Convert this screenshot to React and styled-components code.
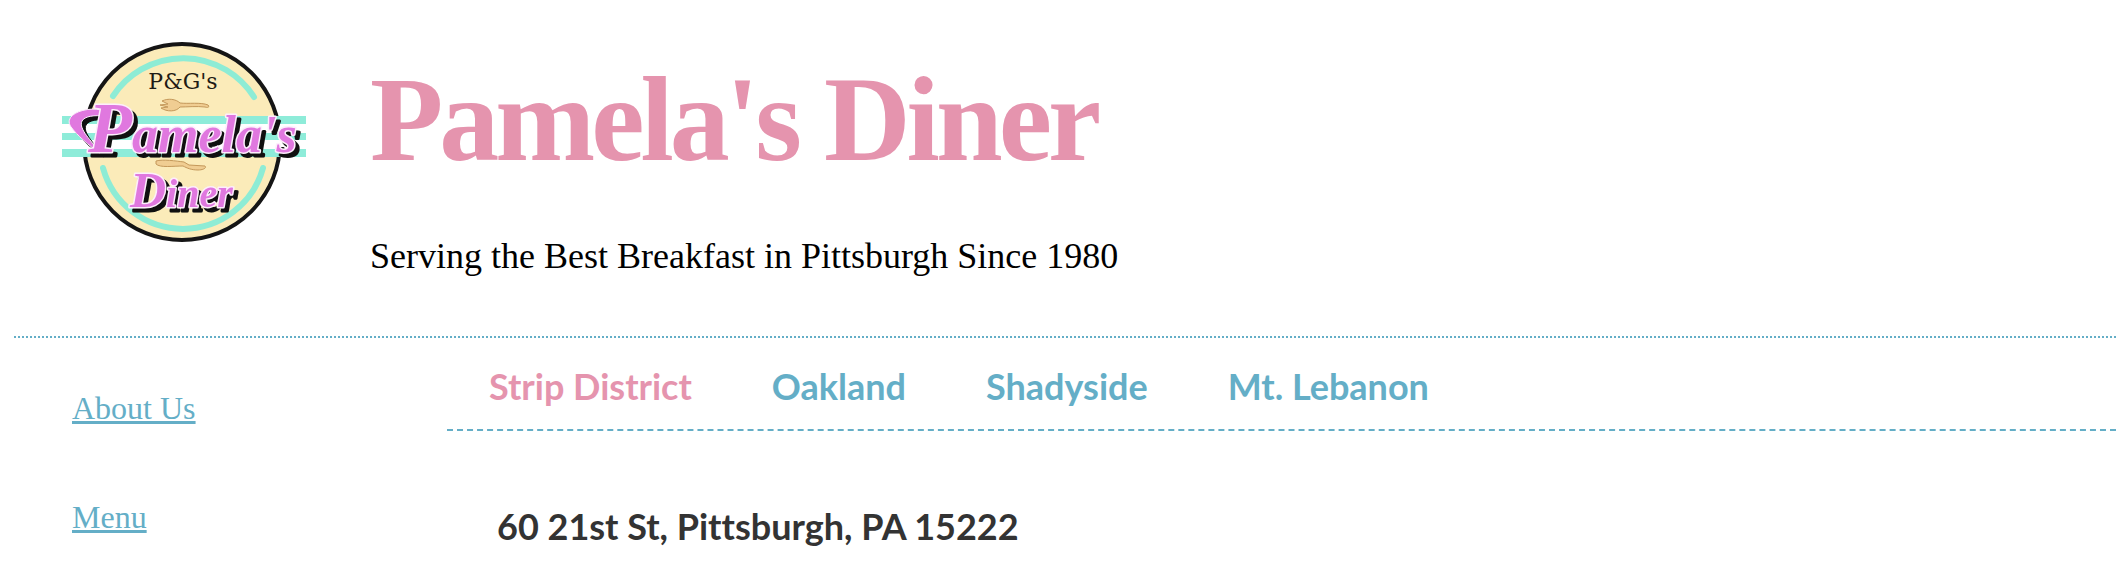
import React from "react";
import styled, { createGlobalStyle } from "styled-components";

const PINK = "#e594ae";
const BLUE = "#64aec7";

const GlobalStyle = createGlobalStyle`
  body {
    margin: 0;
    background: #fff;
    color: #000;
    font-family: "Times New Roman", "Liberation Serif", serif;
  }
`;

const Page = styled.div`
  padding-left: 14px;
`;

const Header = styled.header`
  display: flex;
  align-items: flex-start;
  gap: 64px;
  padding: 30px 0 60px 48px;
  border-bottom: 2px dotted ${BLUE};
`;

const Logo = styled.svg`
  flex: none;
  width: 244px;
  height: 220px;
`;

const Masthead = styled.div`
  padding-top: 30px;
`;

const Title = styled.h1`
  margin: 0 0 56px;
  color: ${PINK};
  font-size: 120px;
  line-height: 120px;
  letter-spacing: -4px;
`;

const Tagline = styled.p`
  margin: 0;
  font-size: 36px;
  line-height: 40px;
`;

const Body = styled.div`
  display: flex;
  align-items: flex-start;
`;

const Sidebar = styled.nav`
  flex: none;
  box-sizing: border-box;
  width: 433px;
  padding: 52px 0 0 58px;
  display: flex;
  flex-direction: column;
  align-items: flex-start;
  gap: 73px;
`;

const SideLink = styled.a`
  color: ${BLUE};
  font-size: 32px;
  line-height: 36px;
  text-decoration-thickness: 3px;
  text-underline-offset: 2px;
  text-decoration-skip-ink: none;
`;

const Main = styled.main`
  flex: 1;
  min-width: 0;
  font-family: "Trebuchet MS", Lato, sans-serif;
  font-weight: 700;
  font-size: 36px;
  line-height: 44px;
  font-variant-ligatures: none;
`;

const Tabs = styled.nav`
  display: flex;
  gap: 80px;
  padding: 26px 0 21px 42px;
  border-bottom: 2px dashed ${BLUE};
`;

const Tab = styled.a`
  color: ${(p) => (p.$active ? PINK : BLUE)};
  text-decoration: none;
  white-space: nowrap;
`;

const Address = styled.address`
  padding: 73px 0 22px 50px;
  color: #333;
  font-style: normal;
`;

const LogoScript = styled.text`
  font-family: "Liberation Serif", serif;
  font-style: italic;
  font-weight: 700;
  fill: #e078df;
  stroke: #fdeefc;
  stroke-width: 3px;
  stroke-linejoin: round;
  paint-order: stroke;
`;

const LogoShadow = styled.g`
  filter: drop-shadow(4px 4px 0 #101010);
`;

function DinerLogo() {
  return (
    <Logo viewBox="12 0 244 220" role="img" aria-label="P&G's Pamela's Diner">
      <circle cx="132" cy="112" r="98" fill="#fbebb9" stroke="#151515" strokeWidth="4" />
      <g fill="none" stroke="#8eecd5" strokeWidth="6" strokeLinecap="round">
        <path d="M63 66A84 84 0 0 1 204 67" />
        <path d="M53 138A83 83 0 0 0 213 138" />
      </g>
      <rect x="12" y="86" width="244" height="41" fill="#fff" />
      <g fill="#8eecd9">
        <rect x="12" y="86" width="244" height="8" />
        <rect x="12" y="103" width="244" height="7" />
        <rect x="12" y="119" width="244" height="8" />
      </g>
      <text x="133" y="59" textAnchor="middle" fontFamily="DejaVu Serif, serif" fontSize="22" fill="#1f1b14">
        P&amp;G's
      </text>
      <g fill="#f0cd92" stroke="#c4985a" strokeWidth="1">
        <path d="M130 73C138 74 151 72 158 75C160 77 158 78 155 77C147 76 137 77 130 77C126 82 117 82 111 78L118 77L110 75L118 74L112 71C118 68 126 69 130 73Z" />
        <path d="M106 131C113 129 126 131 134 132L139 135L155 136C157 138 153 140 148 140C141 140 137 138 133 136C123 136 110 138 106 134Z" />
      </g>
      <LogoShadow>
        <path
          d="M56 81C38 75 12 84 21 97C27 105 39 116 50 123C42 111 28 99 32 91C35 86 44 85 56 86Z"
          fill="#e078df"
          stroke="#fdeefc"
          strokeWidth="1"
        />
        <LogoScript x="38" y="122">
          <tspan fontSize="72">P</tspan>
          <tspan fontSize="52">amela's</tspan>
        </LogoScript>
        <LogoScript x="80" y="177">
          <tspan fontSize="50">D</tspan>
          <tspan fontSize="40">iner</tspan>
        </LogoScript>
      </LogoShadow>
    </Logo>
  );
}

const LOCATIONS = ["Strip District", "Oakland", "Shadyside", "Mt. Lebanon"];

export default function App() {
  return (
    <>
      <GlobalStyle />
      <Page>
        <Header>
          <DinerLogo />
          <Masthead>
            <Title>Pamela's Diner</Title>
            <Tagline>Serving the Best Breakfast in Pittsburgh Since 1980</Tagline>
          </Masthead>
        </Header>
        <Body>
          <Sidebar aria-label="Site">
            <SideLink href="#about">About Us</SideLink>
            <SideLink href="#menu">Menu</SideLink>
          </Sidebar>
          <Main>
            <Tabs aria-label="Locations">
              {LOCATIONS.map((name, i) => (
                <Tab key={name} href="#location" $active={i === 0} aria-current={i === 0 ? "page" : undefined}>
                  {name}
                </Tab>
              ))}
            </Tabs>
            <Address>60 21st St, Pittsburgh, PA 15222</Address>
          </Main>
        </Body>
      </Page>
    </>
  );
}
